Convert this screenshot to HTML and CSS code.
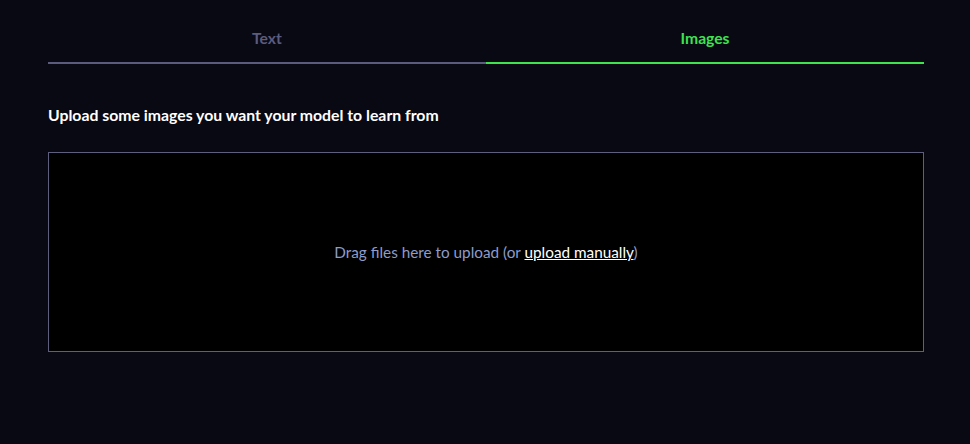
FILE: index.html
```html
<!DOCTYPE html>
<html>
<head>
<meta charset="utf-8">
<link rel="stylesheet" href="styles.css">
</head>
<body>
<div class="page">
  <div class="tabs">
    <div class="tab">Text</div>
    <div class="tab active">Images</div>
  </div>
  <h2 class="heading">Upload some images you want your model to learn from</h2>
  <div class="dropzone">
    <span class="hint">Drag files here to upload (or <a class="link" href="#">upload manually</a>)</span>
  </div>
</div>
</body>
</html>
```
FILE: styles.css
```css
html, body {
  margin: 0;
  padding: 0;
  background: #080913;
  font-family: "Lato", "Open Sans", sans-serif;
}
.page {
  width: 876px;
  margin: 0 0 0 48px;
  padding-top: 28px;
}
.tabs {
  display: flex;
}
.tab {
  flex: 1;
  text-align: center;
  font-weight: 700;
  font-size: 15.7px;
  line-height: 20px;
  color: #5b5b7e;
  padding-bottom: 14px;
  border-bottom: 2px solid #5b5b7e;
}
.tab.active {
  color: #3fe24f;
  border-bottom-color: #3fe24f;
}
.heading {
  margin: 41px 0 0 0;
  font-size: 15.8px;
  line-height: 20px;
  font-weight: 700;
  color: #ffffff;
}
.dropzone {
  margin-top: 27px;
  height: 198px;
  border: 1px solid #5e5e7e;
  background: #000000;
  display: flex;
  align-items: center;
  justify-content: center;
}
.hint {
  font-size: 15.3px;
  color: #8d9ccb;
}
.link {
  color: #ffffff;
  text-decoration: underline;
}
```
